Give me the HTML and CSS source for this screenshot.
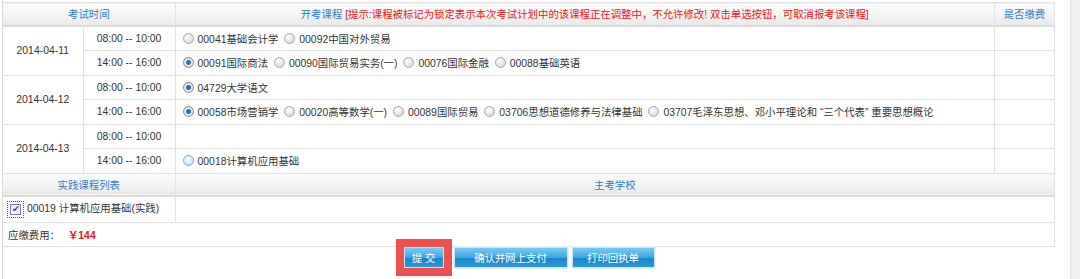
FILE: index.html
```html
<!DOCTYPE html>
<html lang="zh-CN">
<head>
  <meta charset="UTF-8" />
  <meta name="viewport" content="width=device-width, initial-scale=1.0" />
  <title>报考课程</title>
  <link rel="stylesheet" href="styles.css">
</head>
<body>
<div class="page">
  <div class="panel">
    <!-- 考试课程表 -->
    <table class="exam-table">
      <colgroup>
        <col class="col-date">
        <col class="col-time">
        <col class="col-course">
        <col class="col-fee">
      </colgroup>
      <tr class="head-row">
        <th colspan="2">考试时间</th>
        <th>开考课程 <span class="hint">[提示:课程被标记为锁定表示本次考试计划中的该课程正在调整中，不允许修改! 双击单选按钮，可取消报考该课程]</span></th>
        <th>是否缴费</th>
      </tr>
      <tr>
        <td class="date" rowspan="2">2014-04-11</td>
        <td class="time">08:00 -- 10:00</td>
        <td class="courses">
          <label class="opt"><span class="radio"></span>00041基础会计学</label>
          <label class="opt"><span class="radio"></span>00092中国对外贸易</label>
        </td>
        <td></td>
      </tr>
      <tr>
        <td class="time">14:00 -- 16:00</td>
        <td class="courses">
          <label class="opt"><span class="radio on"></span>00091国际商法</label>
          <label class="opt"><span class="radio"></span>00090国际贸易实务(一)</label>
          <label class="opt"><span class="radio"></span>00076国际金融</label>
          <label class="opt"><span class="radio"></span>00088基础英语</label>
        </td>
        <td></td>
      </tr>
      <tr>
        <td class="date" rowspan="2">2014-04-12</td>
        <td class="time">08:00 -- 10:00</td>
        <td class="courses">
          <label class="opt"><span class="radio on"></span>04729大学语文</label>
        </td>
        <td></td>
      </tr>
      <tr>
        <td class="time">14:00 -- 16:00</td>
        <td class="courses">
          <label class="opt"><span class="radio on"></span>00058市场营销学</label>
          <label class="opt"><span class="radio"></span>00020高等数学(一)</label>
          <label class="opt"><span class="radio"></span>00089国际贸易</label>
          <label class="opt"><span class="radio"></span>03706思想道德修养与法律基础</label>
          <label class="opt"><span class="radio"></span>03707毛泽东思想、邓小平理论和 “三个代表” 重要思想概论</label>
        </td>
        <td></td>
      </tr>
      <tr>
        <td class="date" rowspan="2">2014-04-13</td>
        <td class="time">08:00 -- 10:00</td>
        <td class="courses"></td>
        <td></td>
      </tr>
      <tr>
        <td class="time">14:00 -- 16:00</td>
        <td class="courses">
          <label class="opt"><span class="radio hover"></span>00018计算机应用基础</label>
        </td>
        <td></td>
      </tr>
      <tr class="head-row">
        <th colspan="2">实践课程列表</th>
        <th colspan="2">主考学校</th>
      </tr>
      <tr class="practice-row">
        <td class="practice" colspan="2">
          <span class="check-focus"><span class="check">&#10004;</span></span>00019 计算机应用基础(实践)
        </td>
        <td colspan="2"></td>
      </tr>
      <tr>
        <td class="fee-row" colspan="4">应缴费用：<span class="fee">￥144</span></td>
      </tr>
    </table>

    <div class="actions">
      <button class="btn btn-submit">提 交</button>
      <button class="btn btn-pay">确认并网上支付</button>
      <button class="btn btn-print">打印回执单</button>
    </div>
  </div>
  <div class="scroll-track"></div>
</div>
</body>
</html>
```

FILE: styles.css
```css
/* Base Styles */
body {
  margin: 0;
  padding: 0;
  background: #fff;
  font-family: "Liberation Sans", "Noto Sans CJK SC", sans-serif;
  font-size: 10.4px;
  color: #333;
}
.page {
  display: flex;
  height: 279px;
  overflow: hidden;
}
.panel {
  width: 1052px;
  margin-left: 2px;
  border-left: 1px solid #d9d9d9;
  padding-top: 2px;
}
.scroll-track {
  width: 9px;
  margin-left: auto;
  background: #efefef;
  border-left: 1px solid #e4e4e4;
}

/* Table */
.exam-table {
  width: 1052px;
  border-collapse: collapse;
  table-layout: fixed;
  border-top: 1px solid #dcdcdc;
  border-right: 1px solid #dcdcdc;
}
.col-date { width: 80px; }
.col-time { width: 92px; }
.col-course { width: 819px; }
.col-fee { width: 60px; }

.exam-table th,
.exam-table td {
  border: 1px solid #e2e2e2;
  padding: 0;
  height: 23.5px;
  white-space: nowrap;
}
.exam-table tr > :first-child {
  border-left: none;
}
.head-row th {
  font-weight: normal;
  color: #2f7cc3;
  text-align: center;
  height: 21.5px;
  background: linear-gradient(#fbfbfb, #f3f3f3 55%, #e9e9e9);
  border-bottom: 2px solid #dddddd;
}
.hint {
  color: #e8161b;
}
.date,
.time {
  text-align: center;
}
.courses {
  padding-left: 7px !important;
}

/* Radio buttons */
.opt {
  display: inline-flex;
  align-items: center;
  margin-right: 3px;
}
.radio {
  display: inline-block;
  box-sizing: border-box;
  width: 11px;
  height: 11px;
  margin-right: 4px;
  border-radius: 50%;
  border: 1px solid #a9a9a9;
  background: radial-gradient(circle at 40% 35%, #ffffff, #dcdcdc 75%);
}
.radio.on {
  border-color: #8a8a8a;
  background: radial-gradient(circle, #1f5ea8 0, #3d7fc8 2.2px, #e9e9e9 2.8px, #cfcfcf 100%);
}
.radio.hover {
  border-color: #6faed6;
  background: radial-gradient(circle at 40% 35%, #f2faff, #c7e5f7 75%);
}

/* Practice row */
.practice-row td {
  height: 24.5px;
}
.practice {
  padding-left: 4px !important;
}
.check-focus {
  display: inline-block;
  vertical-align: middle;
  padding: 2px;
  margin-right: 3px;
  border: 1px dotted #555;
}
.check {
  display: block;
  box-sizing: border-box;
  width: 11px;
  height: 11px;
  border: 1px solid #7c7ca8;
  background: linear-gradient(#e8e8f4, #ffffff);
  color: #3c3ca6;
  font-size: 9px;
  line-height: 9px;
  text-align: center;
}
.fee-row {
  padding-left: 5px !important;
}
.fee {
  color: #e8161b;
  font-weight: bold;
  margin-left: 8px;
}

/* Buttons */
.actions {
  display: flex;
  justify-content: center;
  gap: 4px;
  margin-top: 0;
}
.btn {
  height: 21px;
  padding: 0;
  border: 1px solid #cfe5f4;
  background: linear-gradient(#77cbf3, #3aa6e4 50%, #1a85cc 51%, #2a97db);
  color: #fff;
  font-family: "Liberation Sans", "Noto Sans CJK SC", sans-serif;
  font-size: 10.4px;
  box-shadow: 0 0 0 1px #e6f1f9;
}
.btn-submit {
  width: 40px;
  outline: 8px solid #ee4f4f;
  margin-right: 6px;
}
.btn-pay {
  width: 114px;
}
.btn-print {
  width: 83px;
}
```
